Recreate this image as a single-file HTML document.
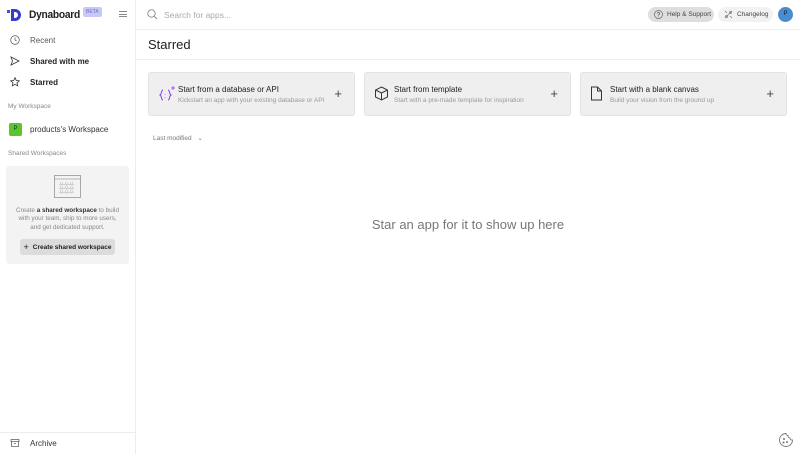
<!DOCTYPE html>
<html><head><meta charset="utf-8"><style>
*{box-sizing:border-box;margin:0;padding:0}
body{width:800px;height:454px;overflow:hidden;font-family:"Liberation Sans",sans-serif;background:#fff;color:#222;position:relative}
.sb{position:absolute;left:0;top:0;width:136px;height:454px;border-right:1px solid #ececec;background:#fff}
.abs{position:absolute}
.nav{position:absolute;left:10px;display:flex;align-items:center;font-size:8px;color:#222;height:10px}
.nav svg{margin-right:10px}
.main{position:absolute;left:136px;top:0;right:0;height:454px}
.card{position:absolute;top:72px;width:207px;height:44px;background:#efefef;border:1px solid #e3e3e3;border-radius:3px}
.card .t{position:absolute;left:29px;top:12px;font-size:8px;color:#222}
.card .s{position:absolute;left:29px;top:24px;font-size:6.5px;color:#999}
.card .p{position:absolute;right:12px;top:13px;font-size:13px;color:#444;font-weight:300}
.card svg{position:absolute;left:9px;top:13px}
.pill{position:absolute;top:7px;height:15px;border-radius:8px;font-size:6.5px;color:#444;display:flex;align-items:center;padding-left:19px}
</style></head><body>
<div class="sb">
 <svg class="abs" style="left:7px;top:8px" width="16" height="14" viewBox="0 0 16 14"><rect x="0" y="2" width="3" height="3" fill="#4a4bd8"/><path d="M4 1h4a6 6 0 0 1 0 12H4z M7 4v6h1a3 3 0 0 0 0-6z" fill="#3a3bc8" fill-rule="evenodd"/></svg>
 <div class="abs" style="left:29px;top:9px;font-size:11px;font-weight:bold;color:#222;letter-spacing:-0.3px;transform:scaleX(0.93);transform-origin:left">Dynaboard</div>
 <div class="abs" style="left:83px;top:7px;background:#c9c9f5;color:#6a6ad8;font-size:5px;padding:2px 3px;border-radius:2px">BETA</div>
 <div class="abs" style="left:119px;top:11px;width:8px;height:6px;border-top:1px solid #888;border-bottom:1px solid #888"><div style="margin-top:2px;border-top:1px solid #888"></div></div>
 <div class="nav" style="top:35px;color:#555"><svg width="10" height="10" viewBox="0 0 10 10" fill="none" stroke="#666" stroke-width=".8"><circle cx="5" cy="5" r="4.3"/><path d="M5 2.5V5l1.7 1.2"/></svg>Recent</div>
 <div class="nav" style="top:56px;font-weight:bold"><svg width="10" height="10" viewBox="0 0 10 10" fill="none" stroke="#333" stroke-width=".8"><path d="M1 1l8 4-8 4 1.5-4z"/></svg>Shared with me</div>
 <div class="nav" style="top:77px;font-weight:bold"><svg width="10" height="10" viewBox="0 0 10 10" fill="none" stroke="#333" stroke-width=".8"><path d="M5 .7l1.3 2.8 3 .3-2.3 2 .7 3L5 7.3 2.3 8.8l.7-3-2.3-2 3-.3z"/></svg>Starred</div>
 <div class="abs" style="left:8px;top:103px;font-size:6.5px;color:#888">My Workspace</div>
 <div class="abs" style="left:9px;top:123px;width:13px;height:13px;background:#5bc52a;border-radius:2px;color:#135;font-size:6px;text-align:center;line-height:13px">P</div>
 <div class="abs" style="left:30px;top:125px;font-size:8px;color:#333">products's Workspace</div>
 <div class="abs" style="left:8px;top:150px;font-size:6.5px;color:#888">Shared Workspaces</div>
 <div class="abs" style="left:6px;top:166px;width:123px;height:98px;background:#f3f3f3;border-radius:3px">
  <svg class="abs" style="left:48px;top:9px" width="27" height="23" viewBox="0 0 27 23" fill="none" stroke="#777" stroke-width=".6"><rect x=".5" y=".5" width="26" height="22"/><path d="M.5 4h26"/><g stroke-dasharray="1 1"><rect x="6" y="8" width="3" height="2"/><rect x="11" y="8" width="3" height="2"/><rect x="16" y="8" width="3" height="2"/><rect x="6" y="12" width="3" height="2"/><rect x="11" y="12" width="3" height="2"/><rect x="16" y="12" width="3" height="2"/><rect x="6" y="16" width="3" height="2"/><rect x="11" y="16" width="3" height="2"/><rect x="16" y="16" width="3" height="2"/></g></svg>
  <div class="abs" style="left:0;top:41px;width:123px;text-align:center;font-size:6.3px;color:#888;line-height:8.3px">Create <b style="color:#333">a shared workspace</b> to build<br>with your team, ship to more users,<br>and get dedicated support.</div>
  <div class="abs" style="left:14px;top:73px;width:95px;height:16px;background:#dcdcdc;border-radius:3px;font-size:6.5px;font-weight:bold;color:#222;line-height:16px;text-align:center;white-space:nowrap"><span style="font-weight:300;font-size:9px;margin-right:4px;vertical-align:-1px">+</span>Create shared workspace</div>
 </div>
 <div class="abs" style="left:0;top:432px;width:136px;border-top:1px solid #ececec"></div>
 <div class="nav" style="top:438px;color:#333"><svg width="10" height="10" viewBox="0 0 10 10" fill="none" stroke="#666" stroke-width=".8"><rect x="1" y="1.5" width="8" height="2"/><path d="M1.5 3.5v5h7v-5M4 5.5h2"/></svg>Archive</div>
</div>
<div class="main">
 <div class="abs" style="left:0;top:29px;right:0;border-top:1px solid #efefef"></div>
 <svg class="abs" style="left:11px;top:9px" width="11" height="11" viewBox="0 0 11 11" fill="none" stroke="#888" stroke-width=".9"><circle cx="4.5" cy="4.5" r="3.7"/><path d="M7.3 7.3L10 10"/></svg>
 <div class="abs" style="left:28px;top:10px;font-size:8.5px;color:#aaa">Search for apps...</div>
 <div class="pill" style="left:512px;width:66px;background:#dedede">Help &amp; Support</div>
 <svg class="abs" style="left:518px;top:10px" width="9" height="9" viewBox="0 0 9 9" fill="none" stroke="#666" stroke-width=".7"><circle cx="4.5" cy="4.5" r="4"/><path d="M3.3 3.5a1.2 1.2 0 1 1 1.2 1.3v.8M4.5 6.5v.4"/></svg>
 <div class="pill" style="left:582px;width:55px;background:#f2f2f2">Changelog</div>
 <svg class="abs" style="left:588px;top:10px" width="9" height="9" viewBox="0 0 9 9" fill="none" stroke="#777" stroke-width=".7"><path d="M1 8L8 1M1 1l2 2M6 6l2 2"/><circle cx="6.5" cy="2.5" r="1"/><circle cx="2.5" cy="6.5" r="1"/></svg>
 <div class="abs" style="left:642px;top:7px;width:15px;height:15px;border-radius:50%;background:#4a8cd0;color:#123;font-size:6px;text-align:center;line-height:15px">P</div>
 <div class="abs" style="left:12px;top:37px;font-size:13px;color:#222">Starred</div>
 <div class="abs" style="left:0;top:59px;right:0;border-top:1px solid #efefef"></div>
</div>
<div class="card" style="left:148px"><svg width="18" height="18" viewBox="0 0 18 18" fill="none" stroke="#8a3ee8" stroke-width="1"><path d="M5 4c-2 0-1 4-3 5 2 1 1 5 3 5M10 4c2 0 1 4 3 5-2 1-1 5-3 5M7 8v.5M7 11v.5"/><path d="M15 0v4M13 2h4" stroke-width=".8"/></svg><div class="t">Start from a database or API</div><div class="s">Kickstart an app with your existing database or API</div><div class="p">+</div></div>
<div class="card" style="left:364px"><svg width="15" height="15" viewBox="0 0 15 15" fill="none" stroke="#333" stroke-width="1"><path d="M7.5 1L13.5 4v7l-6 3-6-3V4zM1.5 4l6 3 6-3M7.5 7v7"/></svg><div class="t">Start from template</div><div class="s">Start with a pre-made template for inspiration</div><div class="p">+</div></div>
<div class="card" style="left:580px"><svg width="13" height="15" viewBox="0 0 13 15" fill="none" stroke="#333" stroke-width="1"><path d="M1.5 1h6l4 4v9h-10zM7.5 1v4h4"/></svg><div class="t">Start with a blank canvas</div><div class="s">Build your vision from the ground up</div><div class="p">+</div></div>
<div class="abs" style="left:153px;top:134px;font-size:6.5px;color:#777">Last modified <span style="margin-left:4px">&#8964;</span></div>
<div class="abs" style="left:136px;top:217px;width:664px;text-align:center;font-size:13px;color:#777">Star an app for it to show up here</div>
<svg class="abs" style="left:778px;top:432px" width="16" height="16" viewBox="0 0 16 16" fill="none" stroke="#777" stroke-width=".9"><path d="M8 1.5a6.5 6.5 0 1 0 6.5 6.5 2 2 0 0 1-2.5-2 2 2 0 0 1-2-2.5A2 2 0 0 1 8 1.5z"/><circle cx="6" cy="7" r=".6"/><circle cx="9" cy="10" r=".6"/><circle cx="5.5" cy="10.5" r=".6"/></svg>
</body></html>
